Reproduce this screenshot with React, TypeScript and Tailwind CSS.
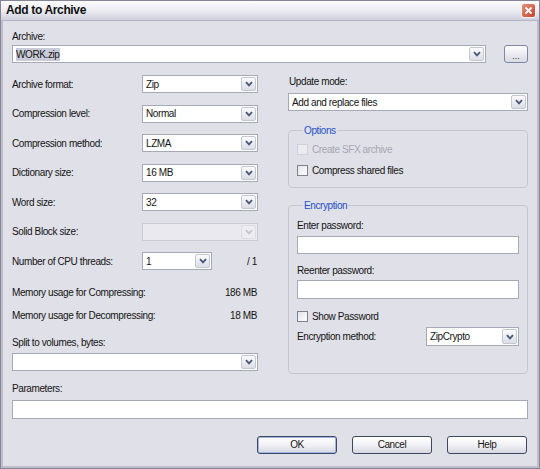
// 7-Zip style "Add to Archive" dialog, XP silver look

import React from 'react';
import clsx from 'clsx';

const Chevron: React.FC<{ disabled?: boolean }> = ({ disabled }) => (
  <svg width="8" height="6" viewBox="0 0 8 6">
    <path
      d="M1 1.2 L4 4.4 L7 1.2"
      fill="none"
      stroke={disabled ? '#c4c6d0' : '#4a5a78'}
      strokeWidth="1.9"
    />
  </svg>
);

const Combo: React.FC<{
  value?: string;
  className?: string;
  disabled?: boolean;
  selected?: boolean;
}> = ({ value, className, disabled, selected }) => (
  <div
    className={clsx(
      'h-[18px] flex items-stretch border',
      disabled ? 'border-[#cbccd4] bg-[#e9e9ef]' : 'border-[#a5a9b8] bg-white',
      className,
    )}
  >
    <div className="flex-1 flex items-center px-[3px] min-w-0 whitespace-nowrap">
      {selected ? <span className="bg-[#c9ccd8] pr-[1px]">{value}</span> : value}
    </div>
    <div
      className={clsx(
        'w-[15px] m-[1px] rounded-[2px] border flex items-center justify-center',
        disabled
          ? 'border-[#dcdde3] bg-[#ececf1]'
          : 'border-[#c3c7d3] bg-gradient-to-b from-[#fbfbfd] to-[#dcdde6]',
      )}
    >
      <Chevron disabled={disabled} />
    </div>
  </div>
);

const TextBox: React.FC<{ className?: string }> = ({ className }) => (
  <div className={clsx('border border-[#a5a9b8] bg-white', className)} />
);

const Check: React.FC<{ label: string; disabled?: boolean }> = ({ label, disabled }) => (
  <div className={clsx('flex items-center gap-[4px] h-[13px]', disabled && 'text-[#a6a7b0]')}>
    <span
      className={clsx(
        'w-[11px] h-[11px] border',
        disabled ? 'border-[#cfd0d8] bg-[#ececf0]' : 'border-[#7d8190] bg-gradient-to-br from-[#e4e4ea] to-white',
      )}
    />
    <span>{label}</span>
  </div>
);

const Button: React.FC<{ label: string; primary?: boolean }> = ({ label, primary }) => (
  <button
    className={clsx(
      'w-[80px] h-[18px] rounded-[3px] border border-[#3d4760] bg-gradient-to-b from-white via-[#f2f2f6] to-[#d6d7e0] leading-none',
      primary && 'shadow-[inset_0_0_0_1px_#9db6e6]',
    )}
  >
    {label}
  </button>
);

const LEFT_ROWS: { label: string; value?: string; disabled?: boolean }[] = [
  { label: 'Archive format:', value: 'Zip' },
  { label: 'Compression level:', value: 'Normal' },
  { label: 'Compression method:', value: 'LZMA' },
  { label: 'Dictionary size:', value: '16 MB' },
  { label: 'Word size:', value: '32' },
  { label: 'Solid Block size:', disabled: true },
];

export default function App() {
  return (
    <div className="w-[540px] h-[469px] flex flex-col bg-[#e0e0e8] border border-[#858597] font-['Liberation_Sans',Arial,sans-serif] text-[10px] tracking-[-0.4px] leading-[13px] text-[#141414]">
      {/* ── Title bar ───────────────────────────────────────────── */}
      <div className="h-[20px] flex items-center justify-between pl-[5px] pr-[3px] bg-gradient-to-b from-[#fcfcfe] via-[#ececf2] to-[#cfd0dc] border-b border-[#b4b5c4]">
        <span className="font-bold text-[12px] tracking-[-0.35px] text-[#101010]">Add to Archive</span>
        <div className="w-[15px] h-[15px] rounded-[3px] border border-[#f4f4f8] bg-gradient-to-br from-[#e58e7a] to-[#c3412a] flex items-center justify-center">
          <svg width="9" height="9" viewBox="0 0 9 9">
            <path d="M1.5 1.5 L7.5 7.5 M7.5 1.5 L1.5 7.5" stroke="white" strokeWidth="1.8" />
          </svg>
        </div>
      </div>

      {/* ── Body ────────────────────────────────────────────────── */}
      <div className="flex-1 flex flex-col border-x-2 border-b-2 border-[#bdbdcb] px-[9px] pt-[8.5px]">
        <span>Archive:</span>
        <div className="flex items-center mt-[2.5px]">
          <Combo value="WORK.zip" selected className="w-[474px]" />
          <button className="ml-auto w-[24px] h-[18px] rounded-[3px] border border-[#7c88a6] bg-gradient-to-b from-white to-[#d8d9e2] flex items-center justify-center pt-[4px] text-[9px] tracking-normal leading-none text-[#333]">
            ...
          </button>
        </div>

        <div className="flex gap-[30px] mt-[12px]">
          {/* Left column */}
          <div className="w-[246px] flex flex-col">
            <div className="flex flex-col gap-[11.5px]">
              {LEFT_ROWS.map(r => (
                <div key={r.label} className="flex items-center">
                  <span className="w-[130px]">{r.label}</span>
                  <Combo value={r.value} disabled={r.disabled} className="w-[116px]" />
                </div>
              ))}
              <div className="flex items-center">
                <span className="w-[130px]">Number of CPU threads:</span>
                <Combo value="1" className="w-[70px]" />
                <span className="ml-auto pr-[1px]">/ 1</span>
              </div>
            </div>
            <div className="flex justify-between mt-[15.5px] pr-[1px]">
              <span>Memory usage for Compressing:</span>
              <span>186 MB</span>
            </div>
            <div className="flex justify-between mt-[10px] pr-[1px]">
              <span>Memory usage for Decompressing:</span>
              <span>18 MB</span>
            </div>
            <span className="mt-[14px]">Split to volumes, bytes:</span>
            <Combo className="w-full mt-[4.5px]" />
          </div>

          {/* Right column */}
          <div className="w-[240px] flex flex-col">
            <span className="pl-[1px]">Update mode:</span>
            <Combo value="Add and replace files" className="w-full mt-[5px]" />

            <fieldset className="mt-[12.5px] border border-[#c6c7d2] rounded-[4px] px-[8px] pb-[10.5px]">
              <legend className="px-[1px] ml-[6px] text-[#2450c8]">Options</legend>
              <div className="flex flex-col gap-[8px] mt-[6px]">
                <Check label="Create SFX archive" disabled />
                <Check label="Compress shared files" />
              </div>
            </fieldset>

            <fieldset className="mt-[10.5px] border border-[#c6c7d2] rounded-[4px] px-[8px] pb-[27px]">
              <legend className="px-[1px] ml-[6px] text-[#2450c8]">Encryption</legend>
              <div className="flex flex-col mt-[7px]">
                <span>Enter password:</span>
                <TextBox className="h-[18px] mt-[4.5px]" />
                <span className="mt-[9.5px]">Reenter password:</span>
                <TextBox className="h-[19px] mt-[3.5px]" />
                <div className="mt-[10.5px]">
                  <Check label="Show Password" />
                </div>
                <div className="flex items-center justify-between mt-[4.5px]">
                  <span>Encryption method:</span>
                  <Combo value="ZipCrypto" className="w-[93px] h-[19px]" />
                </div>
              </div>
            </fieldset>
          </div>
        </div>

        <span className="mt-[8px]">Parameters:</span>
        <TextBox className="h-[19px] mt-[4.5px]" />

        <div className="flex justify-end gap-[15px] mt-[17px] pr-[1px]">
          <Button label="OK" primary />
          <Button label="Cancel" />
          <Button label="Help" />
        </div>
      </div>
    </div>
  );
}
